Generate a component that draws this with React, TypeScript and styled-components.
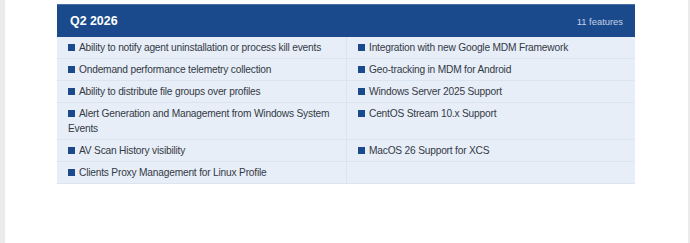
import React from 'react';
import styled, { createGlobalStyle } from 'styled-components';

const GlobalStyle = createGlobalStyle`
  html, body {
    margin: 0;
    padding: 0;
    background-color: #ebebeb;
  }
  body {
    font-family: 'Liberation Sans', Arial, sans-serif;
  }
`;

const Page = styled.div`
  margin: 0 2px 0 5px;
  height: 243px;
  background-color: #ffffff;
  padding: 4px 0 0 52px;
  box-sizing: border-box;
`;

const Card = styled.section`
  width: 578px;
`;

const Header = styled.div`
  display: flex;
  align-items: center;
  justify-content: space-between;
  height: 33px;
  padding: 0 12px 0 13px;
  box-sizing: border-box;
  background-color: #1b4a8c;
  border-top: 1px solid #4a6fa5;
`;

const Title = styled.h3`
  margin: 0;
  font-size: 12.4px;
  font-weight: bold;
  color: #ffffff;
`;

const Count = styled.span`
  font-size: 9.4px;
  color: #c5d3e8;
`;

const Grid = styled.div`
  display: grid;
  grid-template-columns: 290px 288px;
  background-color: #e7eef8;
`;

const Cell = styled.div<{ $left?: boolean }>`
  padding: 3px 11px 3px 11px;
  font-size: 10.2px;
  letter-spacing: -0.2px;
  line-height: 15px;
  color: #333a45;
  border-bottom: 1px solid #dbe4f1;
  border-right: ${({ $left }) => ($left ? '1px solid #dbe4f1' : 'none')};
`;

const Bullet = styled.span`
  display: inline-block;
  width: 7px;
  height: 7px;
  margin-right: 4px;
  background-color: #1b4a8c;
  vertical-align: 0px;
`;

const features: [string, string | null][] = [
  ['Ability to notify agent uninstallation or process kill events', 'Integration with new Google MDM Framework'],
  ['Ondemand performance telemetry collection', 'Geo-tracking in MDM for Android'],
  ['Ability to distribute file groups over profiles', 'Windows Server 2025 Support'],
  ['Alert Generation and Management from Windows System Events', 'CentOS Stream 10.x Support'],
  ['AV Scan History visibility', 'MacOS 26 Support for XCS'],
  ['Clients Proxy Management for Linux Profile', null],
];

const App: React.FC = () => {
  return (
    <>
      <GlobalStyle />
      <Page>
        <Card>
          <Header>
            <Title>Q2 2026</Title>
            <Count>11 features</Count>
          </Header>
          <Grid>
            {features.map(([left, right], i) => (
              <React.Fragment key={i}>
                <Cell $left>
                  <Bullet />
                  {left}
                </Cell>
                <Cell>
                  {right && (
                    <>
                      <Bullet />
                      {right}
                    </>
                  )}
                </Cell>
              </React.Fragment>
            ))}
          </Grid>
        </Card>
      </Page>
    </>
  );
};

export default App;
